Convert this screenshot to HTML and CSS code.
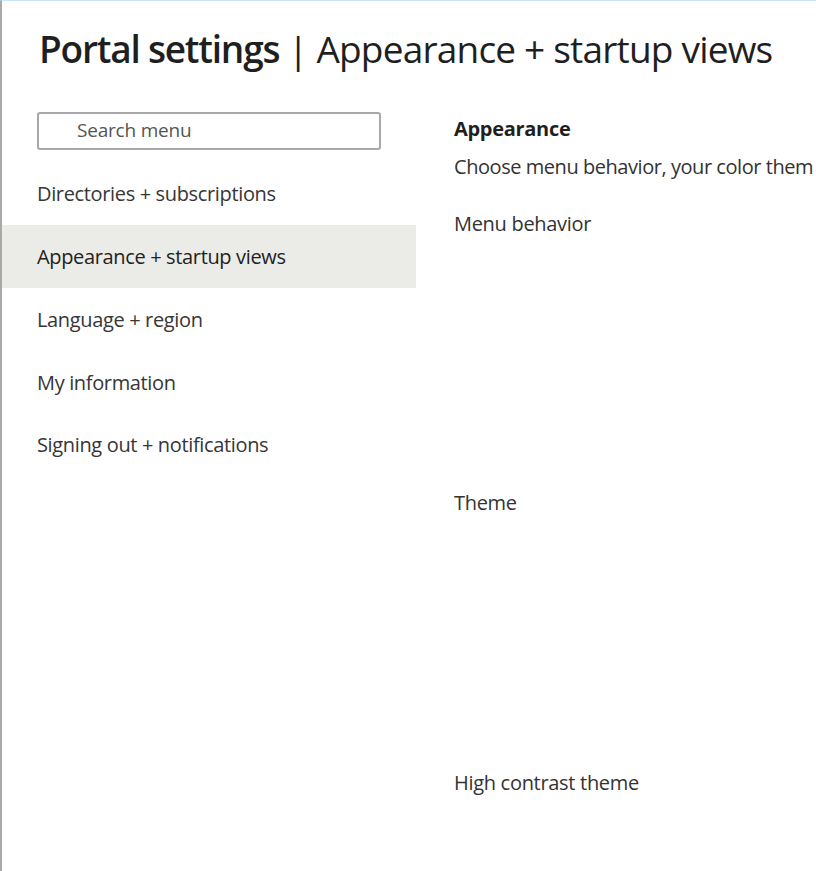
FILE: index.html
```html
<!DOCTYPE html>
<html lang="en">
<head>
<meta charset="utf-8">
<title>Portal settings | Appearance + startup views</title>
<link rel="stylesheet" href="styles.css">
</head>
<body>
<div class="page">
  <h1 class="title"><span class="title-strong">Portal settings</span> | Appearance + startup views</h1>
  <div class="layout">
    <nav class="sidebar">
      <div class="search-wrap">
        <input class="search" type="text" placeholder="Search menu">
      </div>
      <ul class="menu">
        <li class="menu-item">Directories + subscriptions</li>
        <li class="menu-item active">Appearance + startup views</li>
        <li class="menu-item">Language + region</li>
        <li class="menu-item">My information</li>
        <li class="menu-item">Signing out + notifications</li>
      </ul>
    </nav>
    <main class="content">
      <h2 class="section-title">Appearance</h2>
      <p class="section-desc">Choose menu behavior, your color them</p>
      <div class="field field-menu">Menu behavior</div>
      <div class="field field-theme">Theme</div>
      <div class="field field-contrast">High contrast theme</div>
    </main>
  </div>
</div>
</body>
</html>
```

FILE: styles.css
```css
* { box-sizing: border-box; }
html, body {
  margin: 0;
  padding: 0;
  background: #ffffff;
  overflow: hidden;
}
body {
  font-family: "Open Sans", "Noto Sans", sans-serif;
  color: #222222;
}
.page {
  width: 816px;
  height: 871px;
  border-top: 1px solid #c7e6f5;
  border-left: 2px solid #a9a9a9;
  overflow: hidden;
}
.title {
  margin: 0;
  padding: 24px 0 0 37px;
  height: 104px;
  font-size: 37px;
  line-height: 48px;
  font-weight: 400;
  letter-spacing: -0.8px;
  color: #1f1f1f;
  white-space: nowrap;
}
.title-strong {
  font-weight: 600;
  letter-spacing: -1.2px;
}
.layout {
  display: grid;
  grid-template-columns: 414px 1fr;
}
.sidebar {
  display: flex;
  flex-direction: column;
}
.search-wrap {
  padding: 7px 0 0 35px;
}
.search {
  display: block;
  width: 344px;
  height: 38px;
  border: 2px solid #a8a8a8;
  border-radius: 3px;
  padding: 0 0 2px 38px;
  font-family: "Open Sans", "Noto Sans", sans-serif;
  font-size: 19px;
  letter-spacing: -0.2px;
  color: #333;
  outline: none;
}
.search::placeholder {
  color: #555555;
}
.menu {
  list-style: none;
  margin: 12.5px 0 0 0;
  padding: 0;
}
.menu-item {
  height: 62.75px;
  display: flex;
  align-items: center;
  padding-left: 35px;
  font-size: 20px;
  letter-spacing: -0.35px;
  color: #363636;
  white-space: nowrap;
}
.menu-item.active {
  background: #ebebe8;
  color: #222222;
}
.content {
  padding-left: 38px;
  white-space: nowrap;
  overflow: hidden;
}
.section-title {
  margin: 0;
  padding-top: 12px;
  font-size: 20px;
  font-weight: 700;
  letter-spacing: -0.3px;
  line-height: 24px;
  color: #1f1f1f;
}
.section-desc {
  margin: 0;
  padding-top: 14px;
  font-size: 20px;
  letter-spacing: -0.45px;
  line-height: 24px;
  color: #333333;
}
.field {
  font-size: 20px;
  letter-spacing: -0.3px;
  line-height: 24px;
  color: #333333;
}
.field-menu { padding-top: 33px; height: 312px; }
.field-theme { height: 280px; }
```
